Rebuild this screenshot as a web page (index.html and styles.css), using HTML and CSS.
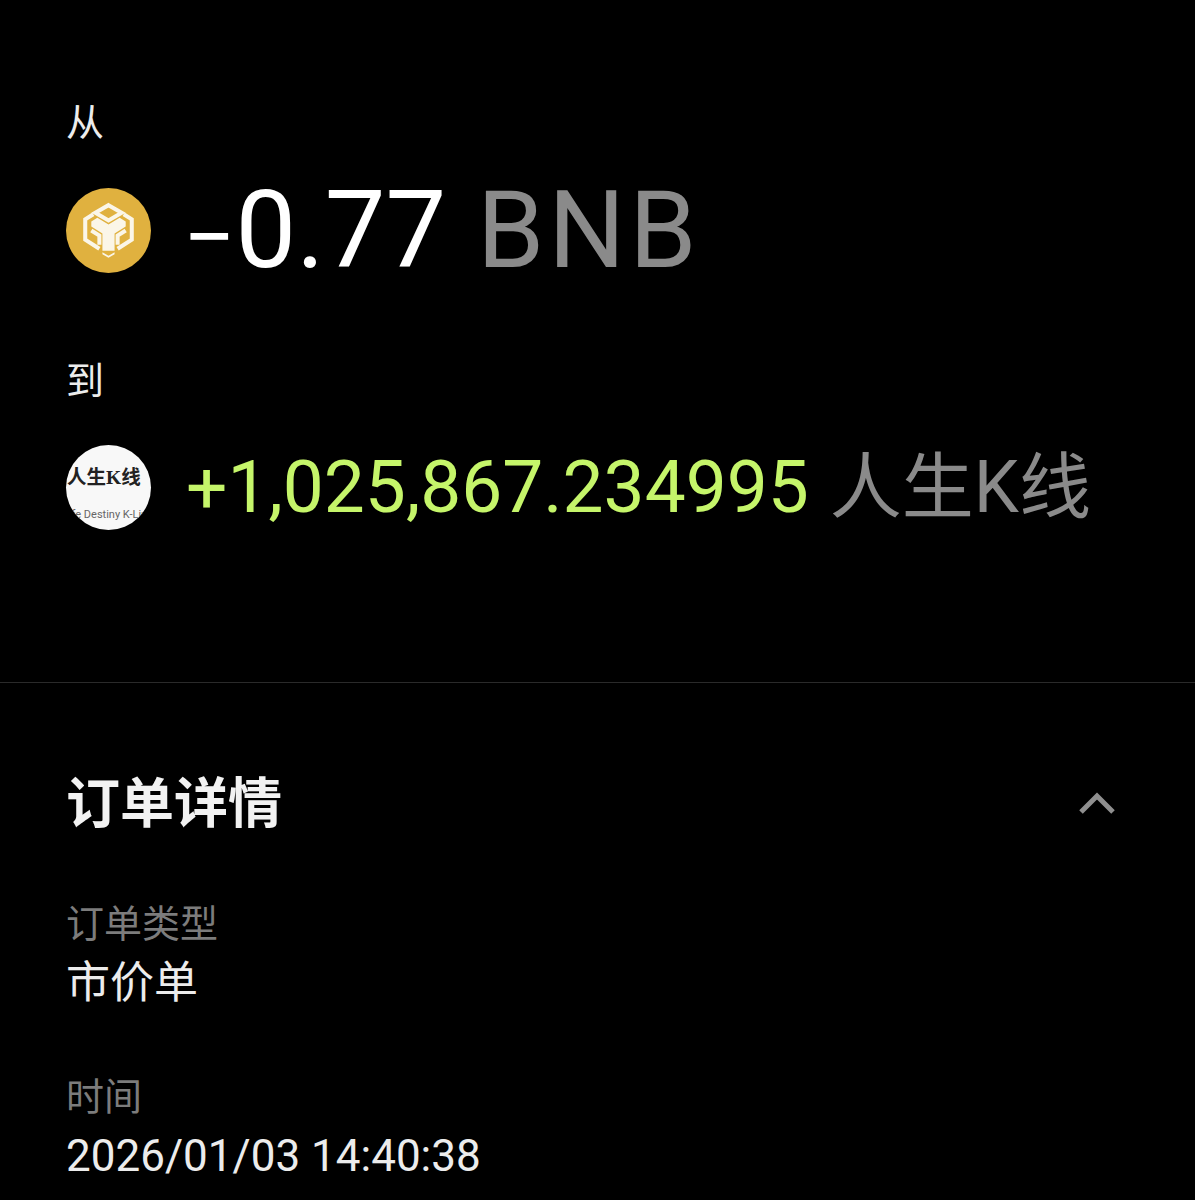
FILE: index.html
```html
<!DOCTYPE html>
<html lang="zh">
<head>
    <meta charset="UTF-8">
    <title>订单详情</title>
    <link rel="stylesheet" href="styles.css">
</head>
<body>
    <section class="swap">
        <div class="swap-label">从</div>
        <div class="amount-row from-row">
            <svg class="token-icon" viewBox="0 0 84 84">
                <circle cx="42" cy="42" r="42" fill="#e0b13f"/>
                <g fill="none" stroke="#fbf6e8" stroke-width="4">
                    <path d="M42 17 L55 24.5 L42 32 L29 24.5 Z"/>
                    <path d="M27 26 L19 31 L19 51 L33 60"/>
                    <path d="M57 26 L65 31 L65 51 L51 60"/>
                    <path d="M25 42 L33 47 L33 56"/>
                    <path d="M59 42 L51 47 L51 56"/>
                </g>
                <path d="M25 33 L31 29.5 L42 36 L53 29.5 L59 33 L59 38 L48 45 L48 62 L36 62 L36 45 L25 38 Z" fill="#fbf6e8"/>
                <path d="M36 63.5 L42 67 L48 63.5 L48 65.5 L42 69 L36 65.5 Z" fill="#fbf6e8"/>
            </svg>
            <div class="amount amount-big">
                <span class="value"><span class="minus">−</span>0.77</span> <span class="unit">BNB</span>
            </div>
        </div>

        <div class="swap-label to-label">到</div>
        <div class="amount-row to-row">
            <div class="token-logo">
                <div class="logo-title">人生K线</div>
                <div class="logo-sub">Life Destiny K-Line</div>
            </div>
            <div class="amount amount-mid">
                <span class="value green">+1,025,867.234995</span> <span class="unit">人生K线</span>
            </div>
        </div>
    </section>

    <section class="details">
        <div class="details-head">
            <h2>订单详情</h2>
            <svg class="chevron" viewBox="0 0 36 22">
                <path d="M2 20 L18 4 L34 20" fill="none" stroke="#8f8f8f" stroke-width="5"/>
            </svg>
        </div>
        <div class="field">
            <div class="field-name">订单类型</div>
            <div class="field-value">市价单</div>
        </div>
        <div class="field">
            <div class="field-name">时间</div>
            <div class="field-value">2026/01/03 14:40:38</div>
        </div>
    </section>
</body>
</html>
```

FILE: styles.css
```css
body {
    margin: 0;
    height: 1200px;
    overflow: hidden;
    background: #000;
    color: #fff;
    font-family: Roboto, "Noto Sans CJK SC", sans-serif;
}
.swap {
    padding: 101px 66px 0;
    height: 581px;
    border-bottom: 1px solid #2a2a2a;
}
.swap-label {
    font-size: 38px;
    line-height: 44px;
    color: #ececec;
}
.to-label {
    margin-top: 74px;
}
.amount-row {
    display: flex;
    align-items: center;
}
.from-row {
    margin-top: 30px;
    gap: 32px;
}
.to-row {
    margin-top: 42px;
    gap: 35px;
}
.token-icon {
    width: 85px;
    height: 85px;
    flex: none;
}
.token-logo {
    width: 85px;
    height: 85px;
    flex: none;
    border-radius: 50%;
    background: #f8f8f8;
    overflow: hidden;
    color: #222;
    white-space: nowrap;
}
.logo-title {
    margin: 20px 0 0 1px;
    font-family: "Liberation Serif", "Noto Sans CJK SC", serif;
    font-size: 19.5px;
    line-height: 26px;
    font-weight: bold;
}
.logo-sub {
    margin: 17px 0 0 -3px;
    font-size: 11px;
    line-height: 14px;
    color: #666;
}
.amount {
    white-space: nowrap;
}
.amount-big {
    font-size: 108px;
    line-height: 110px;
}
.amount-big .unit {
    margin-left: 4px;
    letter-spacing: 4px;
}
.minus {
    font-size: 92px;
    line-height: 0;
    vertical-align: -2px;
}
.amount-mid {
    font-size: 73px;
    line-height: 84px;
}
.amount-mid .unit {
    margin-left: 3px;
    font-size: 72px;
}
.unit {
    color: #8a8a8a;
}
.green {
    color: #c5f56a;
}
.details {
    padding: 0 66px;
}
.details-head {
    display: flex;
    align-items: center;
    justify-content: space-between;
    margin-top: 92px;
}
.details-head h2 {
    margin: 0;
    font-size: 54px;
    line-height: 60px;
    font-weight: 700;
    color: #f2f2f2;
}
.chevron {
    width: 36px;
    height: 22px;
    margin: 0 14px 4px 0;
}
.field {
    margin-top: 67px;
}
.field + .field {
    margin-top: 68px;
}
.field-name {
    font-size: 38px;
    line-height: 44px;
    color: #7c7c7c;
}
.field-value {
    margin-top: 13px;
    font-size: 44px;
    line-height: 48px;
    color: #ececec;
}
```
